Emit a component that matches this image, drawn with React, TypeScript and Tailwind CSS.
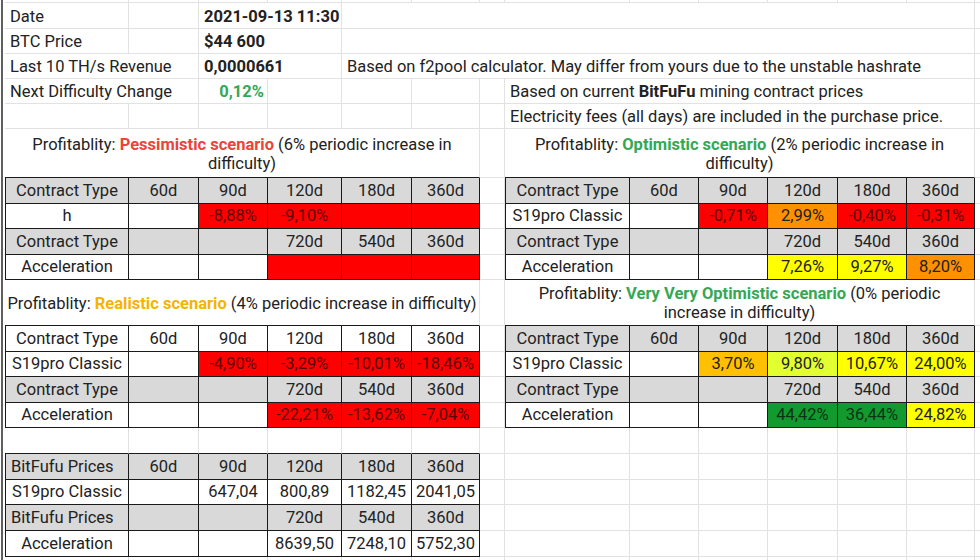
import React from 'react';

const LIGHT = 'border-r border-b border-[#e2e2e2]';
const NCELL = 'border-b border-[#e2e2e2]';
const TB = 'border-r border-b border-[#1a1a1a]';
const TBL = 'border-l border-r border-b border-[#1a1a1a]';
const HEAD = 'border-r border-b border-r-[#e2e2e2] border-b-[#1a1a1a]';
const ABOVE = 'border-r border-b border-r-[#e2e2e2] border-b-[#1a1a1a]';

const SPAN: Record<number, string> = { 1: '', 2: 'col-span-2', 6: 'col-span-6', 9: 'col-span-9' };

type Align = 'left' | 'center' | 'right';
type CellProps = { span?: number; cls?: string; align?: Align; top?: boolean; children?: React.ReactNode };

function Cell({ span = 1, cls = LIGHT, align = 'left', top = false, children }: CellProps) {
  const a =
    align === 'center'
      ? 'justify-center text-center'
      : align === 'right'
      ? 'justify-end pr-[3px]'
      : 'justify-start pl-[5px]';
  const pad = top ? 'pt-[3px]' : 'pt-px';
  return <div className={`${SPAN[span]} ${cls} ${pad} flex items-center whitespace-nowrap ${a}`}>{children}</div>;
}

const GR = 'bg-[#d9d9d9]';
const RED = 'bg-[#ff0000] text-[#5a0000]';
const ORG = 'bg-[#ff9000]';
const AMB = 'bg-[#ffc000]';
const YG = 'bg-[#e2ff32]';
const YEL = 'bg-[#ffff00]';
const GRN = 'bg-[#129a2e] text-[#0d3316]';

type TC = { t?: string; bg?: string; align?: Align };

const headTop: TC[] = [
  { t: 'Contract Type', bg: GR },
  { t: '60d', bg: GR },
  { t: '90d', bg: GR },
  { t: '120d', bg: GR },
  { t: '180d', bg: GR },
  { t: '360d', bg: GR },
];
const headSecond: TC[] = [
  { t: 'Contract Type', bg: GR },
  { bg: GR },
  { bg: GR },
  { t: '720d', bg: GR },
  { t: '540d', bg: GR },
  { t: '360d', bg: GR },
];

const pessimistic: TC[][] = [
  headTop,
  [{ t: 'h' }, {}, { t: '-8,88%', bg: RED }, { t: '-9,10%', bg: RED }, { bg: RED }, { bg: RED }],
  headSecond,
  [{ t: 'Acceleration' }, {}, {}, { bg: RED }, { bg: RED }, { bg: RED }],
];

const optimistic: TC[][] = [
  headTop,
  [
    { t: 'S19pro Classic' },
    {},
    { t: '-0,71%', bg: RED },
    { t: '2,99%', bg: ORG },
    { t: '-0,40%', bg: RED },
    { t: '-0,31%', bg: RED },
  ],
  headSecond,
  [{ t: 'Acceleration' }, {}, {}, { t: '7,26%', bg: YEL }, { t: '9,27%', bg: YEL }, { t: '8,20%', bg: ORG }],
];

const realistic: TC[][] = [
  [{ t: 'Contract Type' }, { t: '60d' }, { t: '90d' }, { t: '120d' }, { t: '180d' }, { t: '360d' }],
  [
    { t: 'S19pro Classic' },
    {},
    { t: '-4,90%', bg: RED },
    { t: '-3,29%', bg: RED },
    { t: '-10,01%', bg: RED },
    { t: '-18,46%', bg: RED },
  ],
  headSecond,
  [{ t: 'Acceleration' }, {}, {}, { t: '-22,21%', bg: RED }, { t: '-13,62%', bg: RED }, { t: '-7,04%', bg: RED }],
];

const veryvery: TC[][] = [
  headTop,
  [
    { t: 'S19pro Classic' },
    {},
    { t: '3,70%', bg: AMB },
    { t: '9,80%', bg: YG },
    { t: '10,67%', bg: YEL },
    { t: '24,00%', bg: YEL },
  ],
  headSecond,
  [{ t: 'Acceleration' }, {}, {}, { t: '44,42%', bg: GRN }, { t: '36,44%', bg: GRN }, { t: '24,82%', bg: YEL }],
];

const prices: TC[][] = [
  [
    { t: 'BitFufu Prices', bg: GR, align: 'left' },
    { t: '60d', bg: GR },
    { t: '90d', bg: GR },
    { t: '120d', bg: GR },
    { t: '180d', bg: GR },
    { t: '360d', bg: GR },
  ],
  [{ t: 'S19pro Classic' }, {}, { t: '647,04' }, { t: '800,89' }, { t: '1182,45' }, { t: '2041,05' }],
  [
    { t: 'BitFufu Prices', bg: GR, align: 'left' },
    { bg: GR },
    { bg: GR },
    { t: '720d', bg: GR },
    { t: '540d', bg: GR },
    { t: '360d', bg: GR },
  ],
  [{ t: 'Acceleration' }, {}, {}, { t: '8639,50' }, { t: '7248,10' }, { t: '5752,30' }],
];

function TableCells({ cells }: { cells: TC[] }) {
  return (
    <>
      {cells.map((c, i) => (
        <Cell key={i} cls={`${i === 0 ? TBL : TB} ${c.bg ?? ''}`} align={c.align ?? 'center'}>
          {c.t}
        </Cell>
      ))}
    </>
  );
}

function LightCells({ n, cls = LIGHT }: { n: number; cls?: string }) {
  return (
    <>
      {Array.from({ length: n }).map((_, i) => (
        <Cell key={i} cls={cls} />
      ))}
    </>
  );
}

function Heading({ children }: { children: React.ReactNode }) {
  return (
    <div className={`col-span-6 ${HEAD} flex items-center justify-center text-center leading-[19px] pt-px`}>
      <div>{children}</div>
    </div>
  );
}

export default function App() {
  return (
    <div className="w-[980px] h-[560px] overflow-hidden bg-white flex font-['Roboto',sans-serif] text-[16.5px] text-[#222]">
      <div className="w-px shrink-0" />
      <div className="w-[2px] shrink-0 bg-[#5f5f5f]" />
      <div className="w-[2px] shrink-0" />
      <div className="grid grid-cols-[124px_70px_69px_74px_70px_68px_25px_125px_69px_69px_70px_69px_68px_5px] grid-rows-[3px_26px_25px_25px_25px_25px_49px_26px_25px_26px_25px_46px_26px_25px_26px_25px_26px_26px_25px_26px_26px_3px]">
        {/* row 0 (partial) */}
        <LightCells n={13} />
        <Cell cls={NCELL} />

        {/* row 1 */}
        <Cell top>Date</Cell>
        <Cell />
        <Cell span={2} top>
          <span className="font-bold">2021-09-13 11:30</span>
        </Cell>
        <Cell span={9} />
        <Cell cls={NCELL} />

        {/* row 2 */}
        <Cell top>BTC Price</Cell>
        <Cell />
        <Cell span={2} top>
          <span className="font-bold">$44 600</span>
        </Cell>
        <Cell span={9} />
        <Cell cls={NCELL} />

        {/* row 3 */}
        <Cell span={2} top>
          Last 10 TH/s Revenue
        </Cell>
        <Cell span={2} top>
          <span className="font-bold">0,0000661</span>
        </Cell>
        <Cell span={9} top>
          Based on f2pool calculator. May differ from yours due to the unstable hashrate
        </Cell>
        <Cell cls={NCELL} />

        {/* row 4 */}
        <Cell span={2} top>
          Next Difficulty Change
        </Cell>
        <Cell align="right" top>
          <span className="font-bold text-[#34a853]">0,12%</span>
        </Cell>
        <LightCells n={4} />
        <Cell span={6} top>
          <span>
            Based on current <span className="font-bold">BitFuFu</span> mining contract prices
          </span>
        </Cell>
        <Cell cls={NCELL} />

        {/* row 5 */}
        <LightCells n={7} />
        <Cell span={6} top>
          Electricity fees (all days) are included in the purchase price.
        </Cell>
        <Cell cls={NCELL} />

        {/* row 6 headings */}
        <Heading>
          Profitablity: <span className="font-bold text-[#e8453c]">Pessimistic scenario</span> (6% periodic
          increase in
          <br />
          difficulty)
        </Heading>
        <Cell />
        <Heading>
          Profitablity: <span className="font-bold text-[#34a853]">Optimistic scenario</span> (2% periodic increase
          in
          <br />
          difficulty)
        </Heading>
        <Cell cls={NCELL} />

        {/* rows 7-10 */}
        {pessimistic.map((r, i) => (
          <React.Fragment key={i}>
            <TableCells cells={r} />
            <Cell />
            <TableCells cells={optimistic[i]} />
            <Cell cls={NCELL} />
          </React.Fragment>
        ))}

        {/* row 11 headings */}
        <Heading>
          <span className="whitespace-nowrap">
            Profitablity: <span className="font-bold text-[#f4b400]">Realistic scenario</span> (4% periodic increase
            in difficulty)
          </span>
        </Heading>
        <Cell />
        <Heading>
          Profitablity: <span className="font-bold text-[#34a853]">Very Very Optimistic scenario</span> (0% periodic
          <br />
          increase in difficulty)
        </Heading>
        <Cell cls={NCELL} />

        {/* rows 12-15 */}
        {realistic.map((r, i) => (
          <React.Fragment key={i}>
            <TableCells cells={r} />
            <Cell />
            <TableCells cells={veryvery[i]} />
            <Cell cls={NCELL} />
          </React.Fragment>
        ))}

        {/* row 16 */}
        <LightCells n={6} cls={ABOVE} />
        <LightCells n={7} />
        <Cell cls={NCELL} />

        {/* rows 17-20 */}
        {prices.map((r, i) => (
          <React.Fragment key={i}>
            <TableCells cells={r} />
            <LightCells n={7} />
            <Cell cls={NCELL} />
          </React.Fragment>
        ))}

        {/* row 21 partial */}
        <LightCells n={13} cls="border-r border-[#e2e2e2]" />
        <Cell cls="" />
      </div>
    </div>
  );
}
